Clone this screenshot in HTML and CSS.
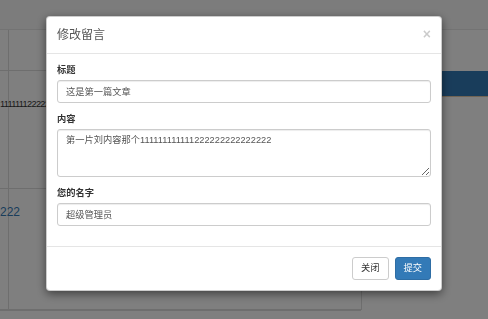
FILE: index.html
```html
<!DOCTYPE html>
<html>
<head>
<meta charset="utf-8">
<link rel="stylesheet" href="styles.css">
</head>
<body>
<div class="page">
  <div class="topbar"></div>
  <div class="main">
    <div class="panel">
      <div class="row row-head"></div>
      <div class="row row-text"><span class="cell-text">1111111222222222222</span></div>
      <div class="row row-link"><a class="cell-link">222</a></div>
      <div class="row row-foot"></div>
    </div>
    <div class="side">
      <div class="side-active"></div>
    </div>
  </div>
</div>
<div class="backdrop"></div>
<div class="modal">
  <div class="modal-header">
    <h4 class="modal-title">修改留言</h4>
    <span class="close">×</span>
  </div>
  <div class="modal-body">
    <div class="form-group">
      <label class="label">标题</label>
      <input class="form-control" type="text" value="这是第一篇文章">
    </div>
    <div class="form-group">
      <label class="label">内容</label>
      <textarea class="form-control area">第一片刘内容那个111111111111222222222222222</textarea>
    </div>
    <div class="form-group">
      <label class="label">您的名字</label>
      <input class="form-control" type="text" value="超级管理员">
    </div>
  </div>
  <div class="modal-footer">
    <button class="btn btn-default">关闭</button>
    <button class="btn btn-primary">提交</button>
  </div>
</div>
</body>
</html>
```
FILE: styles.css
```css
* { box-sizing: border-box; }
html, body { margin: 0; padding: 0; }
body {
  width: 488px;
  height: 319px;
  overflow: hidden;
  background: #fff;
  font-family: "Liberation Sans", "Noto Sans CJK SC", sans-serif;
  font-size: 9.25px;
  line-height: 1.42857;
  color: #333;
}
.page { height: 319px; }
.topbar {
  height: 30px;
  border-bottom: 1px solid #e7e7e7;
  background: #f8f8f8;
}
.main {
  display: flex;
}
.panel {
  width: 362px;
  height: 280px;
  border-right: 1px solid #ddd;
  border-bottom: 1px solid #ddd;
  background: linear-gradient(#ddd, #ddd) 8px 0 / 1px 100% no-repeat;
}
.row { border-bottom: 1px solid #ddd; }
.row-head { height: 41px; }
.row-text {
  height: 118px;
  padding-top: 27px;
  overflow: hidden;
}
.cell-text {
  white-space: nowrap;
  font-size: 9.25px;
  letter-spacing: -0.7px;
  color: #333;
}
.row-link {
  height: 121px;
  padding-top: 15px;
  overflow: hidden;
}
.cell-link { color: #337ab7; font-size: 12px; white-space: nowrap; }
.side { flex: 1; padding-left: 8px; padding-top: 41px; }
.side-active {
  height: 26px;
  background: #337ab7;
  border-bottom: 1px solid #e3c9a8;
}
.backdrop {
  position: fixed;
  inset: 0;
  background: rgba(0,0,0,.5);
}
.modal {
  position: fixed;
  left: 46px;
  top: 16px;
  width: 396px;
  background: #fff;
  border: 1px solid rgba(0,0,0,.2);
  border-radius: 4px;
  box-shadow: 0 3px 10px rgba(0,0,0,.5);
  font-family: "Liberation Sans", "Noto Sans CJK SC", sans-serif;
}
.modal-header {
  display: flex;
  justify-content: space-between;
  align-items: flex-start;
  padding: 10px 10px 9px;
  border-bottom: 1px solid #e5e5e5;
}
.modal-title {
  margin: 0;
  font-size: 12px;
  font-weight: normal;
  line-height: 17px;
  color: #555;
}
.close {
  font-size: 14px;
  font-weight: bold;
  line-height: 14px;
  color: #000;
  opacity: .2;
}
.modal-body { padding: 10px; }
.form-group { margin-bottom: 10px; display: flex; flex-direction: column; }
.label {
  font-weight: bold;
  margin-bottom: 3px;
  line-height: 13.2px;
  color: #333;
}
.form-control {
  display: block;
  width: 100%;
  height: 22.5px;
  padding: 4px 8px;
  font-family: inherit;
  font-size: 9.25px;
  line-height: 13.2px;
  color: #555;
  background: #fff;
  border: 1px solid #ccc;
  border-radius: 3px;
  box-shadow: inset 0 1px 1px rgba(0,0,0,.075);
  margin: 0;
}
.area { height: 48px; resize: vertical; }
.modal-footer {
  display: flex;
  justify-content: flex-end;
  gap: 6px;
  padding: 10px;
  border-top: 1px solid #e5e5e5;
}
.btn {
  font-family: inherit;
  font-size: 9.25px;
  line-height: 13.2px;
  padding: 4px 8px;
  border: 1px solid transparent;
  border-radius: 3px;
  margin: 0;
}
.btn-default { background: #fff; color: #333; border-color: #ccc; }
.btn-primary { background: #337ab7; color: #fff; border-color: #2e6da4; }
```
